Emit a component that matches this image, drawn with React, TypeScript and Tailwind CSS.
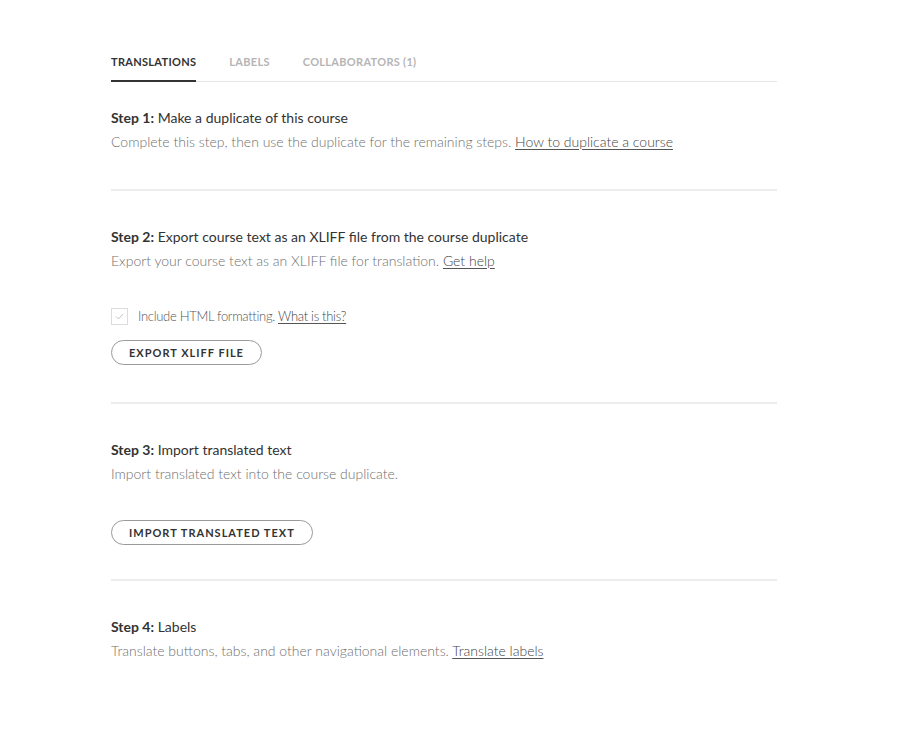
import React from 'react';

const Link: React.FC<{ children: React.ReactNode }> = ({ children }) => (
  <a href="#" className="text-[#444] underline underline-offset-2 decoration-[#555]">
    {children}
  </a>
);

const PillButton: React.FC<{ label: string }> = ({ label }) => (
  <button className="h-[25px] px-[17px] rounded-full border border-[#9a9a9a] text-[11px] font-bold tracking-[1px] text-[#333] leading-none bg-white">
    {label}
  </button>
);

const App: React.FC = () => {
  return (
    <div className="min-h-[736px] bg-white font-['Lato',sans-serif]">
      <div className="ml-[111px] w-[666px] pt-[54px]">
        <div className="flex gap-[33px] border-b border-[#e6e6e6] text-[11px] font-bold tracking-[0.3px] uppercase">
          <div className="pb-[9px] border-b-2 border-[#333] -mb-[1px] text-[#333]">Translations</div>
          <div className="pb-[9px] text-[#b5b5b5]">Labels</div>
          <div className="pb-[9px] text-[#b5b5b5]">Collaborators (1)</div>
        </div>

        <section className="pt-[26px] pb-[37px] border-b-2 border-[#ececec]">
          <h3 className="text-[14px] leading-[20px] text-[#333]">
            <span className="font-bold">Step 1:</span> Make a duplicate of this course
          </h3>
          <p className="mt-[4px] text-[14px] leading-[20px] font-light text-[#6f6f6f]">
            Complete this step, then use the duplicate for the remaining steps. <Link>How to duplicate a course</Link>
          </p>
        </section>

        <section className="pt-[36px] pb-[37px] border-b-2 border-[#ececec]">
          <h3 className="text-[14px] leading-[20px] text-[#333]">
            <span className="font-bold">Step 2:</span> Export course text as an XLIFF file from the course duplicate
          </h3>
          <p className="mt-[4px] text-[14px] leading-[20px] font-light text-[#6f6f6f]">
            Export your course text as an XLIFF file for translation. <Link>Get help</Link>
          </p>
          <div className="mt-[36px] flex items-center gap-[10px]">
            <div className="w-[17px] h-[17px] border border-[#dcdcdc] flex items-center justify-center">
              <svg width="9" height="7" viewBox="0 0 9 7" fill="none">
                <path d="M1 3.5 L3.5 6 L8 1" stroke="#c4c4c4" strokeWidth="1" />
              </svg>
            </div>
            <span className="text-[13px] font-light tracking-[-0.3px] text-[#555]">
              Include HTML formatting. <Link>What is this?</Link>
            </span>
          </div>
          <div className="mt-[13px]">
            <PillButton label="EXPORT XLIFF FILE" />
          </div>
        </section>

        <section className="pt-[36px] pb-[34px] border-b-2 border-[#ececec]">
          <h3 className="text-[14px] leading-[20px] text-[#333]">
            <span className="font-bold">Step 3:</span> Import translated text
          </h3>
          <p className="mt-[4px] text-[14px] leading-[20px] font-light text-[#6f6f6f]">
            Import translated text into the course duplicate.
          </p>
          <div className="mt-[35px]">
            <PillButton label="IMPORT TRANSLATED TEXT" />
          </div>
        </section>

        <section className="pt-[36px]">
          <h3 className="text-[14px] leading-[20px] text-[#333]">
            <span className="font-bold">Step 4:</span> Labels
          </h3>
          <p className="mt-[4px] text-[14px] leading-[20px] font-light text-[#6f6f6f]">
            Translate buttons, tabs, and other navigational elements. <Link>Translate labels</Link>
          </p>
        </section>
      </div>
    </div>
  );
};

export default App;
